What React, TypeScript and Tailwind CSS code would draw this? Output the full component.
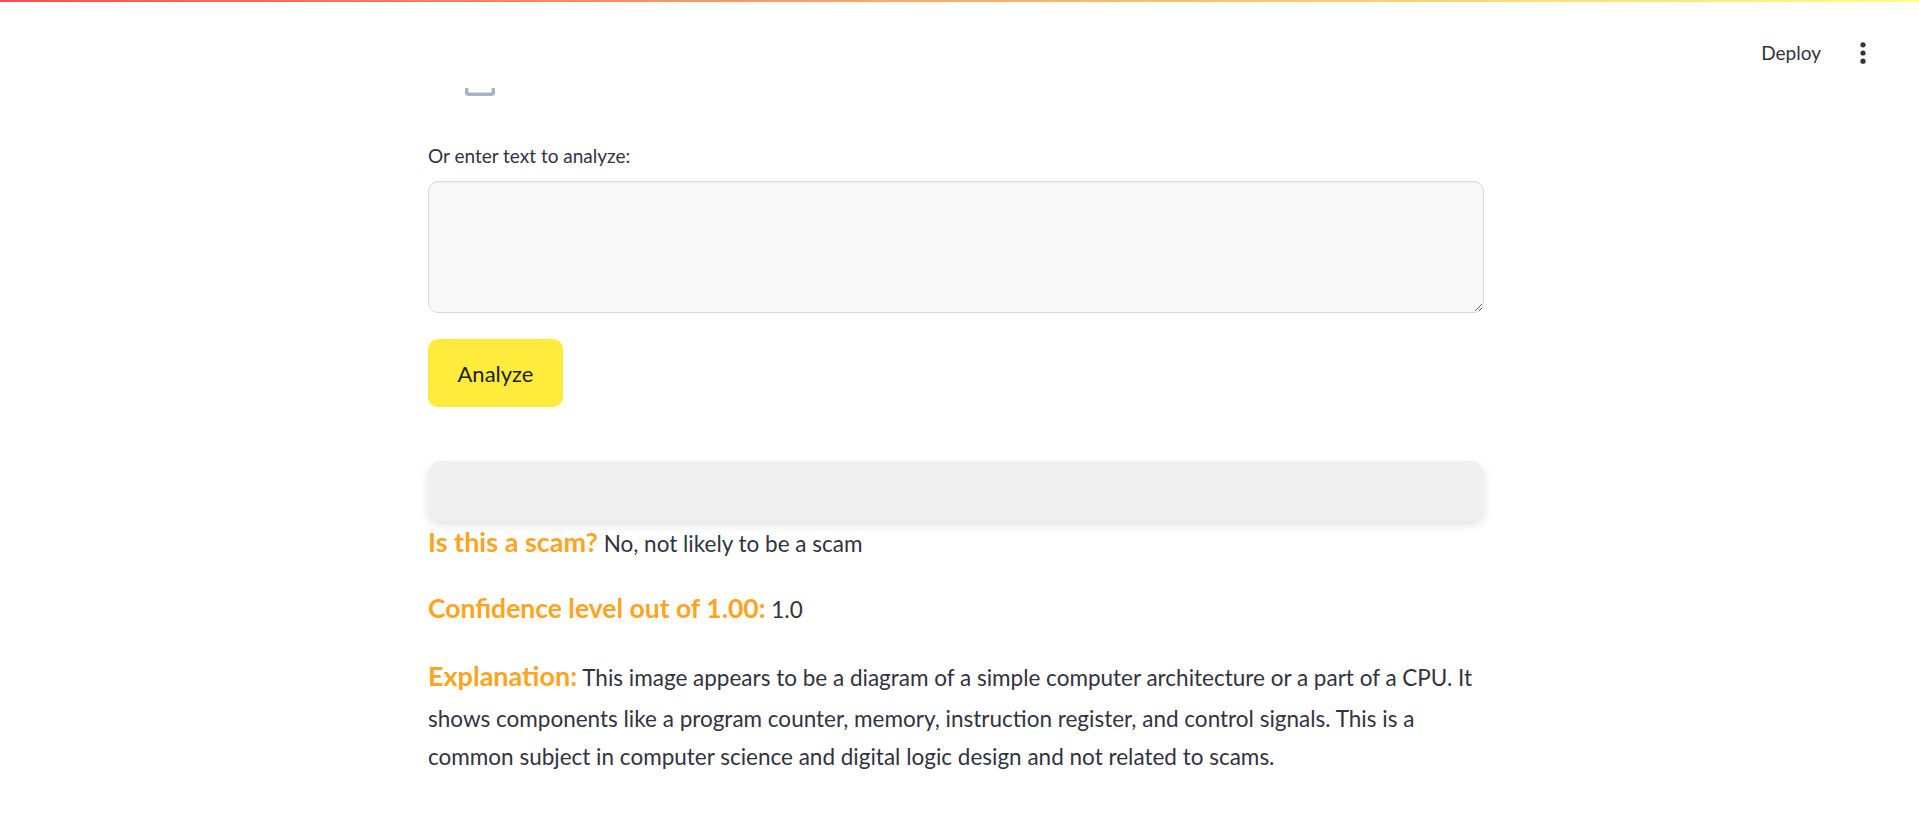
export default function App() {
  return (
    <div className="min-h-[821px] bg-white text-[#31333f]" style={{ fontFamily: 'Lato, "Noto Sans", sans-serif' }}>
      <div className="h-[2px] bg-linear-to-r from-[#ff4b4b] to-[#fffd80]" />
      <div className="h-[80px] flex justify-end items-start pt-[37px] pr-[44px]">
        <span className="text-[19px] leading-[28px] text-[#31333f]">Deploy</span>
        <span className="ml-[30px] w-[24px] h-[28px] flex items-center justify-center">
          <svg width="6" height="22" viewBox="0 0 6 22" fill="#31333f">
            <circle cx="3" cy="2.8" r="2.6" />
            <circle cx="3" cy="11" r="2.6" />
            <circle cx="3" cy="19.2" r="2.6" />
          </svg>
        </span>
      </div>
      <div className="ml-[428px] w-[1056px]">
        <div className="mt-[6px] ml-[37px] h-[8px]">
          <svg width="30" height="8" viewBox="0 0 30 8" fill="none">
            <path d="M1.75 0 V4 a2.2 2.2 0 0 0 2.2 2.2 H26.05 a2.2 2.2 0 0 0 2.2 -2.2 V0" stroke="#a5b0c9" strokeWidth="3.5" strokeLinecap="round" />
          </svg>
        </div>
        <div className="mt-[46px] text-[19px] leading-[28px]">Or enter text to analyze:</div>
        <textarea
          className="mt-[11px] block w-full h-[132px] rounded-[10px] border border-[#dadada] bg-[#f8f8f8] outline-none resize-y shadow-[inset_0_1px_1px_rgba(0,0,0,0.04)]"
          aria-label="Or enter text to analyze:"
        />
        <button className="mt-[26px] block w-[135px] h-[68px] rounded-[10px] bg-[#ffeb3b] text-[22px] text-[#1e1e1e]">
          Analyze
        </button>
        <div className="mt-[54px] h-[60px] rounded-[13px] bg-[#f0f0f0] shadow-[0_4px_10px_rgba(0,0,0,0.12)]" />
        <p className="mt-[4px] text-[22.5px] leading-[37px] whitespace-nowrap">
          <span className="text-[27px] leading-none font-bold text-[#ffa421]">Is this a scam?</span> No, not likely to be a scam
        </p>
        <p className="mt-[29px] text-[22.5px] leading-[37px] whitespace-nowrap">
          <span className="text-[26.5px] leading-none font-bold text-[#ffa421]">Confidence level out of 1.00:</span> 1.0
        </p>
        <p className="mt-[31px] text-[22.5px] leading-[38px] whitespace-nowrap">
          <span className="block mb-[3px]">
            <span className="text-[27px] leading-none font-bold text-[#ffa421]">Explanation:</span> This image appears to be a diagram of a simple computer architecture or a part of a CPU. It
          </span>
          <span className="block">
            shows components like a program counter, memory, instruction register, and control signals. This is a
          </span>
          <span className="block">common subject in computer science and digital logic design and not related to scams.</span>
        </p>
      </div>
    </div>
  );
}
